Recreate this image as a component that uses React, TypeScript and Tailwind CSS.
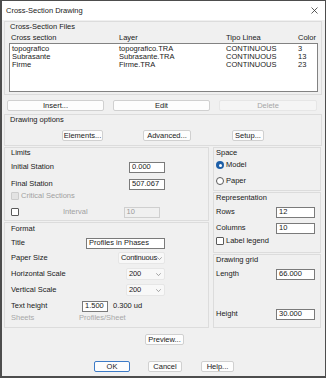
import React from "react";

const Btn = ({
  label,
  w,
  disabled,
  primary,
}: {
  label: string;
  w: string;
  disabled?: boolean;
  primary?: boolean;
}) => (
  <div
    className={`${w} h-[11px] flex items-center justify-center rounded-[2px] border ${
      primary
        ? "border-[#3d7bc7] bg-[#fdfdfd] text-[#1a1a1a]"
        : disabled
        ? "border-[#e6e6e6] bg-[#f5f5f5] text-[#a6a6a6]"
        : "border-[#d0d0d0] bg-[#fdfdfd] text-[#1a1a1a]"
    }`}
  >
    {label}
  </div>
);

const Field = ({
  value,
  w,
  disabled,
}: {
  value: string;
  w: string;
  disabled?: boolean;
}) => (
  <div
    className={`${w} h-[11px] flex items-center pl-[2px] border ${
      disabled
        ? "border-[#cfcfcf] bg-[#f0f0f0] text-[#9a9a9a]"
        : "border-[#7a7a7a] bg-white text-[#1a1a1a]"
    }`}
  >
    {value}
  </div>
);

const Select = ({ value, w }: { value: string; w: string }) => (
  <div className={`${w} h-[12px] flex items-center justify-between pl-[2px] pr-[3px] border border-[#e6e6e6] bg-[#f8f8f8] rounded-[2px]`}>
    <span className="tracking-[-0.2px]">{value}</span>
    <svg width="5" height="3" viewBox="0 0 5 3" className="shrink-0">
      <path d="M0.3 0.3 L2.5 2.6 L4.7 0.3" fill="none" stroke="#808080" strokeWidth="0.7" />
    </svg>
  </div>
);

const Check = ({ disabled }: { disabled?: boolean }) => (
  <div
    className={`w-[8px] h-[8px] rounded-[1px] border ${
      disabled ? "border-[#cccccc] bg-[#e3e3e3]" : "border-[#5a5a5a] bg-white"
    }`}
  />
);

const Radio = ({ on }: { on?: boolean }) =>
  on ? (
    <div className="w-[8px] h-[8px] rounded-full bg-[#1e5fa8] flex items-center justify-center">
      <div className="w-[3px] h-[3px] rounded-full bg-white" />
    </div>
  ) : (
    <div className="w-[8px] h-[8px] rounded-full border border-[#5a5a5a] bg-white" />
  );

const files = [
  ["topografico", "topografico.TRA", "CONTINUOUS", "3"],
  ["Subrasante", "Subrasante.TRA", "CONTINUOUS", "13"],
  ["Firme", "Firme.TRA", "CONTINUOUS", "23"],
];

export default function App() {
  return (
    <div
      className="w-[326px] h-[378px] border border-[#4d4d4d] border-b-2 border-l-2 bg-[#f0f0f0] text-[7.5px] leading-none text-[#1a1a1a] overflow-hidden"
      style={{ fontFamily: '"Liberation Sans", Arial, sans-serif' }}
    >
      {/* Title bar */}
      <div className="h-[19px] bg-white flex items-center justify-between pl-[4px] pr-[7px]">
        <span>Cross-Section Drawing</span>
        <svg width="7" height="7" viewBox="0 0 7 7">
          <path d="M0.5 0.5 L6.5 6.5 M6.5 0.5 L0.5 6.5" stroke="#333" strokeWidth="0.8" />
        </svg>
      </div>

      <div className="pl-[2px] pr-[3px]">
        {/* Cross-Section Files */}
        <div className="mt-[1px] h-[74px] border border-[#dcdcdc] flex flex-col">
          <div className="h-[7px] mt-[1px] pl-[5px] flex items-center">Cross-Section Files</div>
          <div className="mt-[4px] h-[7px] pl-[6px] grid grid-cols-[108px_107px_72px_1fr] items-center">
            <span>Cross section</span>
            <span>Layer</span>
            <span>Tipo Linea</span>
            <span>Color</span>
          </div>
          <div className="mt-[2px] ml-[4px] w-[309px] h-[49px] border border-[#828282] bg-white pt-[1px]">
            {files.map((f) => (
              <div
                key={f[0]}
                className="h-[8px] pl-[2px] grid grid-cols-[107px_107px_72px_1fr] items-center"
              >
                {f.map((c, i) => (
                  <span key={i}>{c}</span>
                ))}
              </div>
            ))}
          </div>
        </div>

        {/* Buttons */}
        <div className="mt-[5px] ml-[3px] flex gap-[9px]">
          <Btn label="Insert..." w="w-[97px]" />
          <Btn label="Edit" w="w-[97px]" />
          <Btn label="Delete" w="w-[98px]" disabled />
        </div>

        {/* Drawing options */}
        <div className="mt-[3px] h-[32px] border border-[#dcdcdc] flex flex-col">
          <div className="h-[8px] mt-[1px] pl-[5px] flex items-center">Drawing options</div>
          <div className="mt-[6px] flex">
            <div className="ml-[57px]">
              <Btn label="Elements..." w="w-[41px]" />
            </div>
            <div className="ml-[40px]">
              <Btn label="Advanced..." w="w-[48px]" />
            </div>
            <div className="ml-[41px]">
              <Btn label="Setup..." w="w-[32px]" />
            </div>
          </div>
        </div>

        <div className="mt-[1px] flex gap-[4px]">
          {/* Left column */}
          <div className="w-[205px] flex flex-col gap-[1px]">
            {/* Limits */}
            <div className="h-[74px] border border-[#dcdcdc] flex flex-col pl-[6px]">
              <div className="h-[8px] mt-[1px] flex items-center">Limits</div>
              <div className="mt-[4px] h-[12px] flex items-center justify-between pr-[43px]">
                <span>Initial Station</span>
                <Field value="0.000" w="w-[36px]" />
              </div>
              <div className="mt-[5px] h-[12px] flex items-center justify-between pr-[43px]">
                <span>Final Station</span>
                <Field value="507.067" w="w-[36px]" />
              </div>
              <div className="mt-[1px] h-[10px] flex items-center gap-[2px] text-[#a0a0a0]">
                <Check disabled />
                <span>Critical Sections</span>
              </div>
              <div className="mt-[5px] h-[12px] flex items-center">
                <Check />
                <span className="ml-[44px] text-[#a0a0a0]">Interval</span>
                <div className="ml-[36px]">
                  <Field value="10" w="w-[36px]" disabled />
                </div>
              </div>
            </div>

            {/* Format */}
            <div className="h-[106px] border border-[#dcdcdc] flex flex-col pl-[6px]">
              <div className="h-[8px] mt-[2px] flex items-center">Format</div>
              <div className="mt-[4px] h-[12px] flex items-center justify-between pr-[43px]">
                <span>Title</span>
                <Field value="Profiles in Phases" w="w-[79px]" />
              </div>
              <div className="mt-[2px] h-[14px] flex items-center justify-between pr-[43px]">
                <span>Paper Size</span>
                <Select value="Continuous" w="w-[47px]" />
              </div>
              <div className="mt-[2px] h-[14px] flex items-center justify-between pr-[43px]">
                <span>Horizontal Scale</span>
                <Select value="200" w="w-[39px]" />
              </div>
              <div className="mt-[2px] h-[14px] flex items-center justify-between pr-[43px]">
                <span>Vertical Scale</span>
                <Select value="200" w="w-[39px]" />
              </div>
              <div className="mt-[3px] h-[12px] flex items-center">
                <span className="w-[71px]">Text height</span>
                <Field value="1.500" w="w-[26px]" />
                <span className="ml-[5px]">0.300 ud</span>
              </div>
              <div className="mt-[2px] h-[8px] flex items-center text-[#a8a8a8]">
                <span className="w-[68px]">Sheets</span>
                <span>Profiles/Sheet</span>
              </div>
            </div>
          </div>

          {/* Right column */}
          <div className="w-[108px] flex flex-col gap-[1px]">
            {/* Space */}
            <div className="h-[44px] border border-[#dcdcdc] flex flex-col pl-[2px]">
              <div className="h-[8px] mt-[1px] flex items-center">Space</div>
              <div className="mt-[3px] h-[10px] flex items-center gap-[2px]">
                <Radio on />
                <span>Model</span>
              </div>
              <div className="mt-[6px] h-[10px] flex items-center gap-[2px]">
                <Radio />
                <span>Paper</span>
              </div>
            </div>

            {/* Representation */}
            <div className="h-[61px] border border-[#dcdcdc] flex flex-col pl-[2px]">
              <div className="h-[8px] mt-[1px] flex items-center">Representation</div>
              <div className="mt-[4px] h-[12px] flex items-center justify-between pr-[5px]">
                <span>Rows</span>
                <Field value="12" w="w-[39px]" />
              </div>
              <div className="mt-[4px] h-[12px] flex items-center justify-between pr-[5px]">
                <span>Columns</span>
                <Field value="10" w="w-[39px]" />
              </div>
              <div className="mt-[2px] h-[10px] flex items-center gap-[2px]">
                <Check />
                <span>Label legend</span>
              </div>
            </div>

            {/* Drawing grid */}
            <div className="h-[74px] border border-[#dcdcdc] flex flex-col pl-[2px]">
              <div className="h-[8px] mt-[1px] flex items-center">Drawing grid</div>
              <div className="mt-[4px] h-[12px] flex items-center justify-between pr-[5px]">
                <span>Length</span>
                <Field value="66.000" w="w-[39px]" />
              </div>
              <div className="mt-[28px] h-[12px] flex items-center justify-between pr-[5px]">
                <span>Height</span>
                <Field value="30.000" w="w-[39px]" />
              </div>
            </div>
          </div>
        </div>

        {/* Preview */}
        <div className="mt-[6px] ml-[141px]">
          <Btn label="Preview..." w="w-[39px]" />
        </div>

        {/* OK / Cancel / Help */}
        <div className="mt-[16px] ml-[90px] flex">
          <Btn label="OK" w="w-[36px]" primary />
          <div className="ml-[18px]">
            <Btn label="Cancel" w="w-[34px]" />
          </div>
          <div className="ml-[19px]">
            <Btn label="Help..." w="w-[33px]" />
          </div>
        </div>
      </div>
    </div>
  );
}
